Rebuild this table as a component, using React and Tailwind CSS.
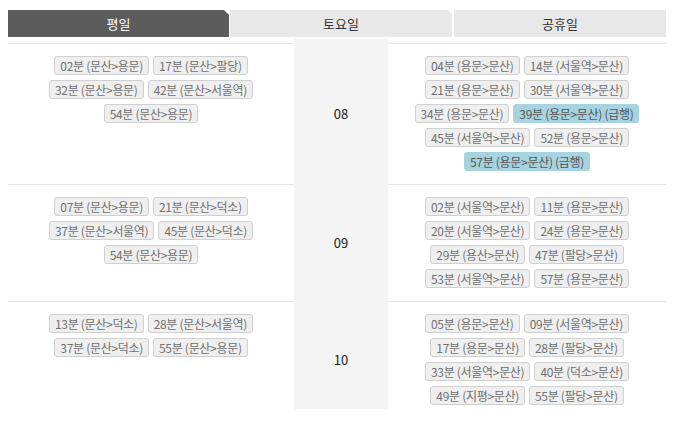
import React from "react";

const F = { fontFamily: '"Noto Sans CJK KR", "Noto Sans", sans-serif' };

const rows = [
  {
    hour: "08",
    left: [
      [["02", "문산", "용문"], ["17", "문산", "팔당"]],
      [["32", "문산", "용문"], ["42", "문산", "서울역"]],
      [["54", "문산", "용문"]],
    ],
    right: [
      [["04", "용문", "문산"], ["14", "서울역", "문산"]],
      [["21", "용문", "문산"], ["30", "서울역", "문산"]],
      [["34", "용문", "문산"], ["39", "용문", "문산", true]],
      [["45", "서울역", "문산"], ["52", "용문", "문산"]],
      [["57", "용문", "문산", true]],
    ],
  },
  {
    hour: "09",
    left: [
      [["07", "문산", "용문"], ["21", "문산", "덕소"]],
      [["37", "문산", "서울역"], ["45", "문산", "덕소"]],
      [["54", "문산", "용문"]],
    ],
    right: [
      [["02", "서울역", "문산"], ["11", "용문", "문산"]],
      [["20", "서울역", "문산"], ["24", "용문", "문산"]],
      [["29", "용산", "문산"], ["47", "팔당", "문산"]],
      [["53", "서울역", "문산"], ["57", "용문", "문산"]],
    ],
  },
  {
    hour: "10",
    last: true,
    left: [
      [["13", "문산", "덕소"], ["28", "문산", "서울역"]],
      [["37", "문산", "덕소"], ["55", "문산", "용문"]],
    ],
    right: [
      [["05", "용문", "문산"], ["09", "서울역", "문산"]],
      [["17", "용문", "문산"], ["28", "팔당", "문산"]],
      [["33", "서울역", "문산"], ["40", "덕소", "문산"]],
      [["49", "지평", "문산"], ["55", "팔당", "문산"]],
    ],
  },
];

function Badge({ b }) {
  const [m, from, to, exp] = b;
  const cls = exp
    ? "h-[19px] leading-[17px] px-[5px] border border-[#a6d3df] bg-[#a6d3df] rounded-[3px] text-[12px] tracking-[-0.3px] text-[#555] whitespace-nowrap"
    : "h-[19px] leading-[17px] px-[5px] border border-[#d0d0d0] bg-[#efefef] rounded-[3px] text-[12px] tracking-[-0.3px] text-[#707070] whitespace-nowrap";
  return (
    <span className={cls} style={F}>
      {m}분 ({from}&gt;{to}){exp ? " (급행)" : ""}
    </span>
  );
}

function Lines({ lines }) {
  return (
    <div className="flex flex-col gap-y-[5px] pt-[12px] pb-[13px]">
      {lines.map((l, i) => (
        <div key={i} className="flex justify-center gap-x-[4px]">
          {l.map((b, j) => (
            <Badge key={j} b={b} />
          ))}
        </div>
      ))}
    </div>
  );
}

export default function App() {
  return (
    <div className="w-[676px] h-[421px] overflow-hidden bg-white" style={F}>
      <div className="ml-[8px] w-[658px] pt-[10px]">
        <div className="flex h-[27px]">
          <div className="w-[221px] bg-[#5c5c5c] text-white text-[13px] flex items-center justify-center [clip-path:polygon(0_0,calc(100%-5px)_0,100%_5px,100%_100%,0_100%)]">
            평일
          </div>
          <div className="ml-[1px] w-[222px] bg-[#e8e8e8] text-[#333] text-[13px] flex items-center justify-center [clip-path:polygon(0_0,calc(100%-4px)_0,100%_4px,100%_100%,0_100%)]">
            토요일
          </div>
          <div className="ml-[2px] w-[212px] bg-[#e8e8e8] text-[#333] text-[13px] flex items-center justify-center">
            공휴일
          </div>
        </div>
        <div className="mt-[2px] grid grid-cols-[286px_94px_278px]">
          <div className="h-[5px] border-b border-[#e6e6e6]" />
          <div className="h-[5px] bg-[#f4f4f4]" />
          <div className="h-[5px] border-b border-[#e6e6e6]" />
          {rows.map((r, i) => (
            <React.Fragment key={r.hour}>
              <div className={i > 0 ? "border-t border-[#e6e6e6]" : ""}>
                <Lines lines={r.left} />
              </div>
              {r.last ? (
                <div className="bg-[#f4f4f4] pt-[9px] border-b-[9px] border-white flex items-center justify-center text-[13px] text-[#222]">
                  {r.hour}
                </div>
              ) : (
                <div className="bg-[#f4f4f4] flex items-center justify-center text-[13px] text-[#222]">
                  {r.hour}
                </div>
              )}
              <div className={i > 0 ? "border-t border-[#e6e6e6]" : ""}>
                <Lines lines={r.right} />
              </div>
            </React.Fragment>
          ))}
        </div>
      </div>
    </div>
  );
}
